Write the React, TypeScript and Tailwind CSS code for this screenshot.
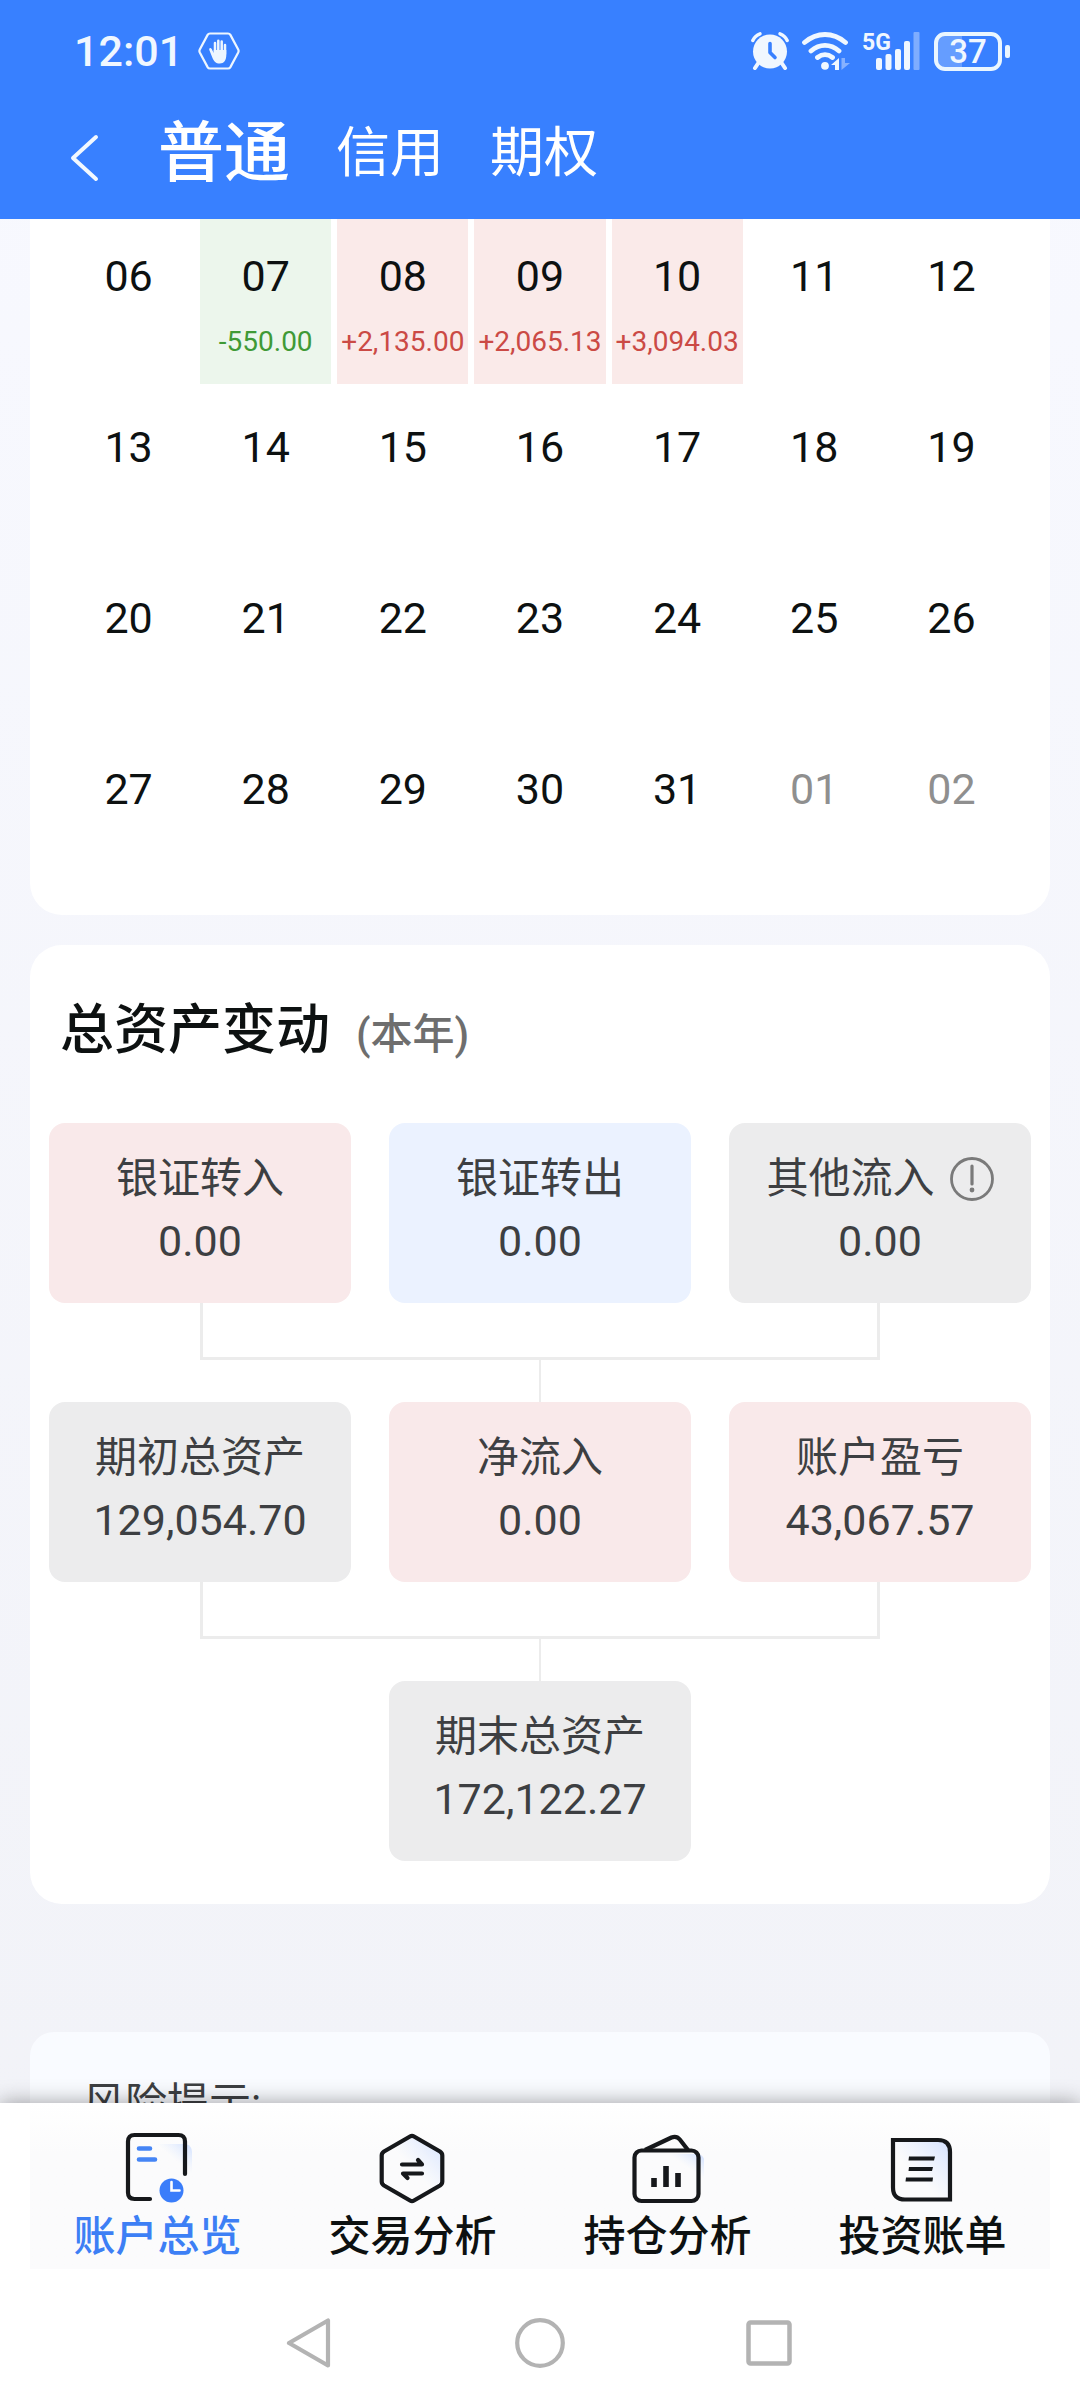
import type { ReactNode } from "react";

type Day = { day: string; profit?: string; muted?: boolean };

const weeks: Day[][] = [
  [
    { day: "06" },
    { day: "07", profit: "-550.00" },
    { day: "08", profit: "+2,135.00" },
    { day: "09", profit: "+2,065.13" },
    { day: "10", profit: "+3,094.03" },
    { day: "11" },
    { day: "12" },
  ],
  ["13", "14", "15", "16", "17", "18", "19"].map((day) => ({ day })),
  ["20", "21", "22", "23", "24", "25", "26"].map((day) => ({ day })),
  [
    ...["27", "28", "29", "30", "31"].map((day) => ({ day })),
    { day: "01", muted: true },
    { day: "02", muted: true },
  ],
];

function HandIcon() {
  return (
    <svg className="h-[38px] w-[42px]" viewBox="0 0 42 38" fill="none" aria-hidden="true">
      <path d="M12 1.5h18q1.600 0 2.400 1.400l7.800 14.500q.8 1.600 0 3.200l-7.800 14.500q-.8 1.400-2.400 1.400H12q-1.600 0-2.400-1.400L1.800 20.600q-.8-1.600 0-3.200L9.600 2.900Q10.400 1.500 12 1.500Z" stroke="#eef6ff" strokeWidth="2.200" />
      <path d="M17 20V11M20.300 20V8.800M23.700 20V9.500M27 22V13" stroke="#eef6ff" strokeWidth="2.500" strokeLinecap="round" />
      <path d="M15.700 18h12.600v5c0 5-2.300 8.500-6.500 8.500-4 0-5.800-2-7.300-5.500l-3.200-8c-.6-1.900 1.400-2.600 2.400-1l2 4Z" fill="#eef6ff" />
    </svg>
  );
}

function AlarmIcon() {
  return (
    <svg className="h-[38px] w-[38px]" viewBox="0 0 38 38" fill="none" aria-hidden="true">
      <path d="m8 30-4 6M30 30l4 6" stroke="#f0f7ff" strokeWidth="4" strokeLinecap="round" />
      <path d="M1.800 8.500Q4 3.500 9 1.800M36.200 8.500Q34 3.500 29 1.800" stroke="#f0f7ff" strokeWidth="3.400" strokeLinecap="round" />
      <circle cx="19" cy="19.500" r="17" fill="#f0f7ff" />
      <path d="M19 11.500v9l5 5" stroke="#3880ff" strokeWidth="3.600" strokeLinecap="round" strokeLinejoin="round" />
    </svg>
  );
}

function WifiIcon() {
  return (
    <svg className="h-[38px] w-[48px]" viewBox="0 0 48 38" fill="none" aria-hidden="true">
      <path d="M2.500 10.500c12.500-10.700 28.500-10.700 41 0M9 19c8.600-7.500 19.400-7.500 28 0M15.500 25.500c4.800-3.700 10.200-3.700 15 0" stroke="#f0f7ff" strokeWidth="4.800" strokeLinecap="round" />
      <circle cx="23" cy="33.800" r="3.900" fill="#f0f7ff" />
      <path d="M37 26v12h-4v-5h-4Z" fill="#f0f7ff" />
      <path d="M39.500 26h3.500v5h5l-8.500 7Z" fill="#86b1ff" />
    </svg>
  );
}

function SignalIcon() {
  return (
    <svg className="h-[38px] w-[58px]" viewBox="0 0 58 38" overflow="visible" aria-hidden="true">
      <text x="-1" y="18" fill="#f0f7ff" fontFamily="Roboto" fontWeight="700" fontSize="23">5G</text>
      <g fill="#f0f7ff">
        <rect x="13" y="26" width="6" height="12" rx="2" />
        <rect x="22.500" y="22" width="6" height="16" rx="2" />
        <rect x="32" y="17" width="6" height="21" rx="2" />
        <rect x="41" y="9" width="6" height="29" rx="2" />
      </g>
      <rect x="50.500" y="0" width="6" height="38" rx="1" fill="#7fadff" />
    </svg>
  );
}

function Battery() {
  return (
    <div className="flex items-center gap-[3px]">
      <div className="flex h-[39px] w-[68px] items-center justify-center rounded-[11px] border-4 border-[#eaf6ff] bg-linear-to-r from-[#659dff] from-40% to-[#3880ff] to-40% text-[33px] leading-none font-medium">
        37
      </div>
      <div className="h-[13px] w-[5px] rounded-[2px] bg-[#eaf6ff]" />
    </div>
  );
}

function OverviewIcon() {
  return (
    <svg className="size-[72px]" viewBox="0 0 72 72" fill="none" aria-hidden="true">
      <defs>
        <linearGradient id="ov" x1="0" x2="1" y1="1" y2="0"><stop offset=".5" stopColor="#dfeaff" stopOpacity="0" /><stop offset="1" stopColor="#cfdfff" /></linearGradient>
      </defs>
      <path d="M34 12h30q6 2 6 8v22H34Z" fill="url(#ov)" />
      <path d="M63 42V9.500q0-6.500-6.500-6.500h-44Q6 3 6 9.500v51Q6 67 12.500 67H28" stroke="#16181b" strokeWidth="4.200" strokeLinecap="round" />
      <path d="M17 16.500h11M17 27.500h16" stroke="#4585f5" strokeWidth="4.600" strokeLinecap="round" />
      <circle cx="49.500" cy="58.500" r="12" fill="#3a7dfa" />
      <path d="M49.500 50v8.500h8" stroke="#fff" strokeWidth="2.600" strokeLinecap="round" />
    </svg>
  );
}

function TradeIcon() {
  return (
    <svg className="size-[72px]" viewBox="0 0 72 72" fill="none" aria-hidden="true">
      <defs>
        <linearGradient id="tr" x1="0" x2="1" y1="1" y2="0"><stop offset=".5" stopColor="#dfeaff" stopOpacity="0" /><stop offset="1" stopColor="#d3e1ff" /></linearGradient>
      </defs>
      <path d="M33 4.500q2-1.200 4 0l26 15q2.300 1.500 2.300 4v26q0 2.500-2.300 4l-26 15q-2 1.200-4 0l-26-15q-2.300-1.500-2.300-4v-26q0-2.500 2.300-4Z" fill="url(#tr)" stroke="#16181b" strokeWidth="4.200" strokeLinejoin="round" />
      <path d="M25 32.500h20l-4-4.500M45 41.500H26l4.500 4.500" stroke="#16181b" strokeWidth="4.200" strokeLinecap="round" strokeLinejoin="round" />
    </svg>
  );
}

function HoldingsIcon() {
  return (
    <svg className="size-[72px]" viewBox="0 0 72 72" fill="none" aria-hidden="true">
      <defs>
        <linearGradient id="ho" x1="0" x2="1" y1="1" y2="0"><stop offset=".5" stopColor="#dfeaff" stopOpacity="0" /><stop offset="1" stopColor="#cbdcff" /></linearGradient>
      </defs>
      <path d="M36 22h31q6 2 6 10v16H36Z" fill="url(#ho)" />
      <path d="M13 18 39.500 5.500q5-2 8.300 2L56 18" stroke="#16181b" strokeWidth="4.200" strokeLinejoin="round" />
      <rect x="2.500" y="18.500" width="64" height="50.500" rx="7" stroke="#16181b" strokeWidth="4.200" />
      <path d="M22 46v9M34 34v21M46 41v14" stroke="#16181b" strokeWidth="5.600" />
    </svg>
  );
}

function BillIcon() {
  return (
    <svg className="size-[72px]" viewBox="0 0 72 72" fill="none" aria-hidden="true">
      <defs>
        <linearGradient id="bi" x1="0" x2="1" y1="1" y2="0"><stop offset=".4" stopColor="#dfeaff" stopOpacity="0" /><stop offset="1" stopColor="#d3e0ff" /></linearGradient>
      </defs>
      <path d="M6 8h45q12 0 12 12v47.500H18q-12 0-12-12Z" fill="url(#bi)" stroke="#16181b" strokeWidth="4.200" />
      <path d="m22 24.500h26l-1 4H21.500ZM22 35h24l-1 4H21.500ZM19 45.500h27l-.5 4h-27Z" fill="#16181b" />
    </svg>
  );
}

function InfoIcon() {
  return (
    <svg className="size-[44px]" viewBox="0 0 44 44" fill="none" aria-hidden="true">
      <circle cx="22" cy="22" r="20.500" stroke="#7a7a7a" strokeWidth="2.800" />
      <path d="M22 9v18" stroke="#7a7a7a" strokeWidth="3.200" strokeLinecap="round" />
      <circle cx="22" cy="33" r="2.400" fill="#7a7a7a" />
    </svg>
  );
}

function DayCell({ day, profit, muted }: Day) {
  const tone = !profit
    ? "text-[#0d1111]"
    : profit.startsWith("-")
      ? "bg-[#ecf6ec] text-[#3f9a36]"
      : "bg-[#faeae9] text-[#cb4a45]";
  return (
    <td className={`flex h-[165px] flex-col items-center p-0 pt-[32px] ${tone}`}>
      <span className={`text-[43px] leading-[50px] ${muted ? "text-[#8f8f8f]" : "text-[#0d1111]"}`}>{day}</span>
      {profit && <span className="mt-[25px] text-[28px] leading-[32px]">{profit}</span>}
    </td>
  );
}

function AssetBox({ label, value, tone, children }: { label: string; value: string; tone: string; children?: ReactNode }) {
  return (
    <div className={`rounded-2xl pt-[24px] pb-[30px] text-center leading-[63px] text-[#3d3f42] ${tone}`}>
      <div className="flex items-center justify-center gap-[15px] text-[42px]">
        {label}
        {children}
      </div>
      <div className="text-[43px]">{value}</div>
    </div>
  );
}

function Connector() {
  return (
    <div className="flex h-[99px] flex-col items-center px-[15.4%]">
      <div className="h-[57px] w-full border-x-[3px] border-b-[3px] border-[#ececec]" />
      <div className="w-[2px] flex-1 bg-[#ececec]" />
    </div>
  );
}

const tabs = [
  { label: "账户总览", icon: <OverviewIcon />, active: true },
  { label: "交易分析", icon: <TradeIcon /> },
  { label: "持仓分析", icon: <HoldingsIcon /> },
  { label: "投资账单", icon: <BillIcon /> },
];

const pink = "bg-[#f9e9ea]";
const gray = "bg-[#ececed]";
const blue = "bg-[#ebf2ff]";

export default function App() {
  return (
    <div className="flex h-screen flex-col bg-linear-to-b from-[#f8f9ff] to-[#f1f2f7] font-[Roboto,'Noto_Sans_CJK_SC',sans-serif]">
      <header className="bg-[#3880ff] text-white">
        <div className="flex h-[102px] items-center justify-between pr-[70px] pl-[74px]">
          <div className="flex items-center gap-[15px] text-[#f0f7ff]">
            <span className="text-[43px] leading-[50px] font-medium">12:01</span>
            <HandIcon />
          </div>
          <div className="flex items-center gap-[13px] text-[#f0f7ff]">
            <AlarmIcon />
            <WifiIcon />
            <SignalIcon />
            <Battery />
          </div>
        </div>
        <div className="flex h-[117px] items-center pb-[14px] pl-[68px]">
          <button type="button" aria-label="返回" className="mt-[8px] mr-[58px]">
            <svg className="h-[50px] w-[32px]" viewBox="0 0 32 50" fill="none" aria-hidden="true">
              <path d="M28 4 5 25l23 21" stroke="#f2f8ff" strokeWidth="4" strokeLinecap="round" strokeLinejoin="round" />
            </svg>
          </button>
          <nav className="flex items-center gap-[46px]">
            <button type="button" className="text-[66px] leading-[96px] font-medium">普通</button>
            <button type="button" className="text-[54px] leading-[80px]">信用</button>
            <button type="button" className="text-[54px] leading-[80px]">期权</button>
          </nav>
        </div>
      </header>

      <main className="min-h-0 flex-1 overflow-y-auto px-[30px] [scrollbar-width:none]">
        <section className="rounded-b-[32px] bg-white px-[33px] pb-[18px]">
          <table className="block w-full">
            <tbody className="flex flex-col gap-[6px]">
              {weeks.map((week) => (
                <tr key={week[0].day} className="grid grid-cols-7 gap-[6px]">
                  {week.map((d) => (
                    <DayCell key={d.day} {...d} />
                  ))}
                </tr>
              ))}
            </tbody>
          </table>
        </section>

        <section className="mt-[30px] rounded-[32px] bg-white px-[19px] pt-[46px] pb-[43px]">
          <h2 className="mb-[48px] flex items-baseline gap-[26px] pl-[11px] text-[54px] leading-[80px] font-medium text-[#0d1111]">
            总资产变动
            <span className="text-[42px] text-[#6e6e6e]">(本年)</span>
          </h2>
          <div className="grid grid-cols-3 gap-[38px]">
            <AssetBox label="银证转入" value="0.00" tone={pink} />
            <AssetBox label="银证转出" value="0.00" tone={blue} />
            <AssetBox label="其他流入" value="0.00" tone={gray}>
              <button type="button" aria-label="说明">
                <InfoIcon />
              </button>
            </AssetBox>
          </div>
          <Connector />
          <div className="grid grid-cols-3 gap-[38px]">
            <AssetBox label="期初总资产" value="129,054.70" tone={gray} />
            <AssetBox label="净流入" value="0.00" tone={pink} />
            <AssetBox label="账户盈亏" value="43,067.57" tone={pink} />
          </div>
          <Connector />
          <div className="grid grid-cols-3 gap-[38px]">
            <div />
            <AssetBox label="期末总资产" value="172,122.27" tone={gray} />
          </div>
        </section>

        <section className="mt-[128px] rounded-[24px] bg-[#f9fbff] px-[53px] py-[40px] text-[42px] leading-[63px] text-[#3d3f42]">
          风险提示:
        </section>
      </main>

      <footer className="relative bg-white shadow-[0_0_20px_rgba(0,0,0,0.38)]">
        <nav className="mx-[30px] grid grid-cols-4 bg-linear-to-b from-white to-[#fbfbfc] to-30% pt-[29px]">
          {tabs.map((t) => (
            <button
              key={t.label}
              type="button"
              className={`flex flex-col items-center text-[42px] leading-[65px] font-medium ${t.active ? "text-[#3d7ff5]" : "text-[#0d1111]"}`}
            >
              {t.icon}
              {t.label}
            </button>
          ))}
        </nav>
        <div className="flex justify-center gap-[180px] pt-[49px] pb-[32px]">
          <button type="button" aria-label="后退">
            <svg className="size-[50px]" viewBox="0 0 50 50" fill="none" aria-hidden="true">
              <path d="M43 2.500v45L4 25Z" stroke="#b3b3b3" strokeWidth="4.200" strokeLinejoin="round" />
            </svg>
          </button>
          <button type="button" aria-label="主页">
            <svg className="size-[50px]" viewBox="0 0 50 50" fill="none" aria-hidden="true">
              <circle cx="25" cy="25" r="22.800" stroke="#b3b3b3" strokeWidth="4.200" />
            </svg>
          </button>
          <button type="button" aria-label="最近任务">
            <svg className="size-[50px]" viewBox="0 0 50 50" fill="none" aria-hidden="true">
              <rect x="3.500" y="4.500" width="41" height="41" rx="2" stroke="#b3b3b3" strokeWidth="4.500" />
            </svg>
          </button>
        </div>
      </footer>
    </div>
  );
}
